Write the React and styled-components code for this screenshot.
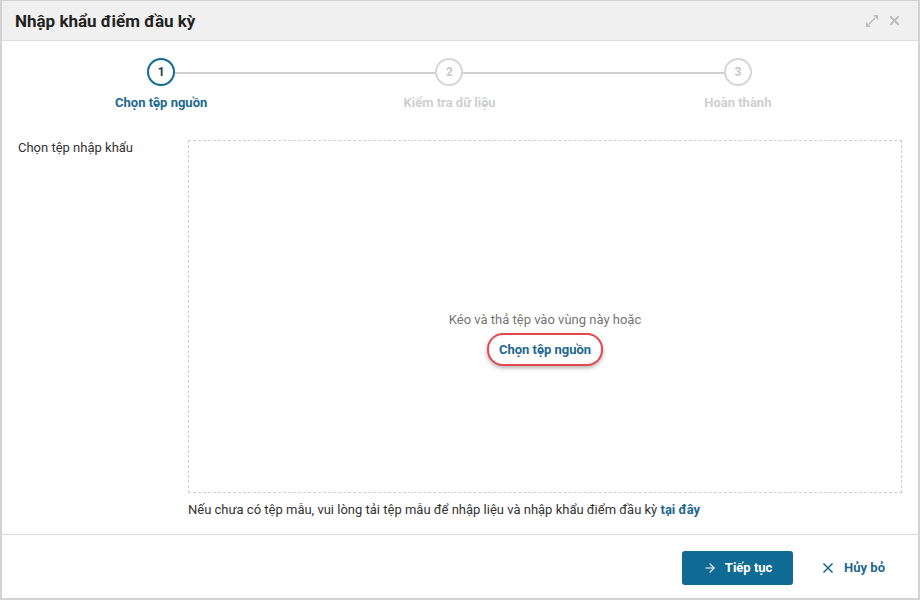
import React from "react";
import styled, { createGlobalStyle } from "styled-components";
import { ArrowRight, X } from "lucide-react";

const GlobalStyle = createGlobalStyle`
  html, body {
    margin: 0;
    padding: 0;
    background: #ffffff;
    font-family: Roboto, "Noto Sans", Arial, sans-serif;
  }
  * { box-sizing: border-box; }
`;

const PRIMARY = "#0f6a94";

const Dialog = styled.section`
  width: 920px;
  height: 600px;
  border: 2px solid #d2d2d2;
  border-top-width: 1px;
  display: flex;
  flex-direction: column;
  background: #ffffff;
`;

const Header = styled.header`
  height: 40px;
  flex: none;
  display: flex;
  align-items: center;
  justify-content: space-between;
  padding: 0 16px 0 13px;
  background: #f0f0f0;
  border-bottom: 1px solid #dddddd;
`;

const Title = styled.h1`
  margin: 0;
  font-size: 17px;
  font-weight: 700;
  color: #222222;
`;

const HeaderTools = styled.div`
  display: flex;
  align-items: center;
  gap: 9px;
  color: #bdbdbd;
`;

const Body = styled.div`
  flex: 1;
  display: flex;
  flex-direction: column;
`;

const Stepper = styled.ol`
  list-style: none;
  margin: 0;
  padding: 17px 36px 0 15px;
  display: grid;
  grid-template-columns: repeat(3, 1fr);
`;

const Step = styled.li`
  position: relative;
  display: flex;
  flex-direction: column;
  align-items: center;

  &:not(:last-child)::after {
    content: "";
    position: absolute;
    top: 14px;
    left: calc(50% + 14px);
    width: calc(100% - 28px);
    height: 2px;
    background: #d0d0d0;
  }
`;

const Circle = styled.span`
  width: 28px;
  height: 28px;
  border-radius: 50%;
  border: 2px solid ${(p) => (p.$active ? PRIMARY : "#d6d6d6")};
  color: ${(p) => (p.$active ? "#1d3b4d" : "#c8c8c8")};
  font-size: 12px;
  font-weight: 700;
  display: flex;
  align-items: center;
  justify-content: center;
`;

const StepLabel = styled.span`
  margin-top: 9px;
  font-size: 13px;
  font-weight: 700;
  color: ${(p) => (p.$active ? "#1d6890" : "#cfcfcf")};
`;

const Content = styled.div`
  display: flex;
  padding: 30px 16px 0 16px;
`;

const FieldLabel = styled.div`
  width: 170px;
  flex: none;
  font-size: 13px;
  color: #333333;
`;

const FieldMain = styled.div`
  flex: 1;
  display: flex;
  flex-direction: column;
`;

const DropZone = styled.div`
  height: 353px;
  border: 1px dashed #cfcfcf;
  display: flex;
  flex-direction: column;
  align-items: center;
  justify-content: center;
  gap: 6px;
  padding-top: 44px;
`;

const DropText = styled.div`
  font-size: 13px;
  color: #757575;
`;

const PickLink = styled.button`
  font-family: inherit;
  font-size: 13px;
  font-weight: 700;
  color: #1d6890;
  background: #ffffff;
  border: 2px solid #e5474e;
  border-radius: 16px;
  padding: 7px 10px;
  box-shadow: 0 2px 4px rgba(0, 0, 0, 0.3);
  cursor: pointer;
`;

const Hint = styled.p`
  margin: 9px 0 0;
  font-size: 13px;
  color: #333333;

  a {
    color: #1d6890;
    font-weight: 700;
    text-decoration: none;
  }
`;

const Footer = styled.footer`
  height: 64px;
  flex: none;
  border-top: 1px solid #dddddd;
  display: flex;
  align-items: center;
  justify-content: flex-end;
  gap: 11px;
  padding: 2px 17px 0 0;
`;

const Button = styled.button`
  height: 34px;
  display: flex;
  align-items: center;
  justify-content: center;
  gap: 8px;
  font-family: inherit;
  font-size: 13px;
  font-weight: 700;
  border-radius: 3px;
  border: none;
  cursor: pointer;
  padding: 0 16px;
  background: ${(p) => (p.$primary ? PRIMARY : "transparent")};
  color: ${(p) => (p.$primary ? "#ffffff" : "#1d6890")};
  width: ${(p) => (p.$primary ? "111px" : "auto")};
`;

function ExpandIcon() {
  return (
    <svg width="12" height="12" viewBox="0 0 12 12" fill="#bdbdbd">
      <path d="M3 9 L9 3" stroke="#bdbdbd" strokeWidth="1.6" />
      <path d="M12 0 L12 5 L7 0 Z" />
      <path d="M0 12 L0 7 L5 12 Z" />
    </svg>
  );
}

const steps = ["Chọn tệp nguồn", "Kiểm tra dữ liệu", "Hoàn thành"];

export default function App() {
  return (
    <>
      <GlobalStyle />
      <Dialog>
        <Header>
          <Title>Nhập khẩu điểm đầu kỳ</Title>
          <HeaderTools>
            <ExpandIcon />
            <X size={15} strokeWidth={3} />
          </HeaderTools>
        </Header>
        <Body>
          <Stepper>
            {steps.map((s, i) => (
              <Step key={s}>
                <Circle $active={i === 0}>{i + 1}</Circle>
                <StepLabel $active={i === 0}>{s}</StepLabel>
              </Step>
            ))}
          </Stepper>
          <Content>
            <FieldLabel>Chọn tệp nhập khẩu</FieldLabel>
            <FieldMain>
              <DropZone>
                <DropText>Kéo và thả tệp vào vùng này hoặc</DropText>
                <PickLink>Chọn tệp nguồn</PickLink>
              </DropZone>
              <Hint>
                Nếu chưa có tệp mẫu, vui lòng tải tệp mẫu để nhập liệu và nhập khẩu điểm đầu kỳ{" "}
                <a href="#">tại đây</a>
              </Hint>
            </FieldMain>
          </Content>
        </Body>
        <Footer>
          <Button $primary>
            <ArrowRight size={14} strokeWidth={2} />
            Tiếp tục
          </Button>
          <Button>
            <X size={16} strokeWidth={2.5} />
            Hủy bỏ
          </Button>
        </Footer>
      </Dialog>
    </>
  );
}
